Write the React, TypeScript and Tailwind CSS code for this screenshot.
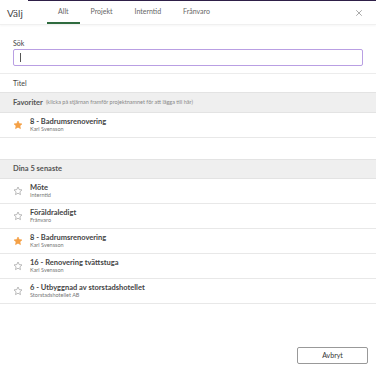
import { X } from "lucide-react";

const recent = [
  { title: "Möte", sub: "Interntid", fav: false },
  { title: "Föräldraledigt", sub: "Frånvaro", fav: false },
  { title: "8 - Badrumsrenovering", sub: "Karl Svensson", fav: true },
  { title: "16 - Renovering tvättstuga", sub: "Karl Svensson", fav: false },
  { title: "6 - Utbyggnad av storstadshotellet", sub: "Storstadshotellet AB", fav: false },
];

function Star({ filled }: { filled: boolean }) {
  return (
    <svg width="10" height="10" viewBox="0 0 24 24" className="shrink-0">
      <path
        d="M12 2.5l2.9 6.1 6.6.8-4.9 4.6 1.3 6.6L12 17.3l-5.9 3.3 1.3-6.6-4.9-4.6 6.6-.8z"
        fill={filled ? "#f4a046" : "none"}
        stroke={filled ? "#f4a046" : "#9a9a9a"}
        strokeWidth="1.6"
        strokeLinejoin="round"
      />
    </svg>
  );
}

function Row({ title, sub, fav }: { title: string; sub: string; fav: boolean }) {
  return (
    <div className="flex h-[25px] items-center border-b border-[#e8e8e8] pl-[13px]">
      <Star filled={fav} />
      <div className="ml-[7px] flex flex-col leading-none">
        <span className="text-[7.5px] font-bold text-[#444]">{title}</span>
        <span className="mt-[2px] text-[5.5px] text-[#777]">{sub}</span>
      </div>
    </div>
  );
}

export default function App() {
  const tabs = ["Allt", "Projekt", "Interntid", "Frånvaro"];
  return (
    <div
      className="flex h-[372px] w-[376px] flex-col bg-white text-[#444] leading-none"
      style={{ fontFamily: "Lato, 'Open Sans', sans-serif" }}
    >
      <div className="ml-[28px] h-px bg-[#2e1f47]" />
      <div className="flex h-[24px] items-stretch border-b border-[#f0f0f0] shadow-[0_1px_2px_rgba(0,0,0,0.04)]">
        <div className="flex w-[47px] items-center pl-[7px] text-[10px] text-[#444]">Välj</div>
        {tabs.map((t, i) => (
          <div
            key={t}
            className={
              "flex items-center px-[11px] text-[7px] text-[#666] " +
              (i === 0 ? "border-b-[2px] border-[#2f6b3f]" : "border-b-[2px] border-transparent")
            }
          >
            {t}
          </div>
        ))}
        <div className="ml-auto flex items-center pr-[12px]">
          <X size={10} strokeWidth={1.5} className="text-[#777]" />
        </div>
      </div>

      <div className="border-b border-[#ececec] px-[13px] pb-[7px] pt-[13px]">
        <div className="text-[7px] leading-[10px] text-[#444]">Sök</div>
        <div className="mt-[1px] flex h-[17px] items-center rounded-[2px] border border-[#b99fe3] pl-[6px]">
          <div className="h-[9px] w-px bg-[#555]" />
        </div>
      </div>

      <div className="flex h-[18px] items-center pl-[13px] text-[7px] text-[#444]">Titel</div>

      <div className="flex h-[21px] items-center border-y border-[#e3e3e3] bg-[#efefef] pl-[13px]">
        <span className="text-[7.5px] font-bold text-[#555]">Favoriter</span>
        <span className="ml-[3px] text-[5.5px] text-[#888]">
          (klicka på stjärnan framför projektnamnet för att lägga till här)
        </span>
      </div>
      <Row title="8 - Badrumsrenovering" sub="Karl Svensson" fav />
      <div className="h-[21px]" />

      <div className="flex h-[20px] items-center border-y border-[#e3e3e3] bg-[#efefef] pl-[13px]">
        <span className="text-[7.5px] font-bold text-[#555]">Dina 5 senaste</span>
      </div>
      {recent.map((r) => (
        <Row key={r.title} {...r} />
      ))}

      <div className="mt-auto flex justify-end pb-[8px] pr-[8px]">
        <button className="h-[17px] w-[71px] rounded-[2px] border border-[#999] text-[7px] text-[#333]">
          Avbryt
        </button>
      </div>
    </div>
  );
}
